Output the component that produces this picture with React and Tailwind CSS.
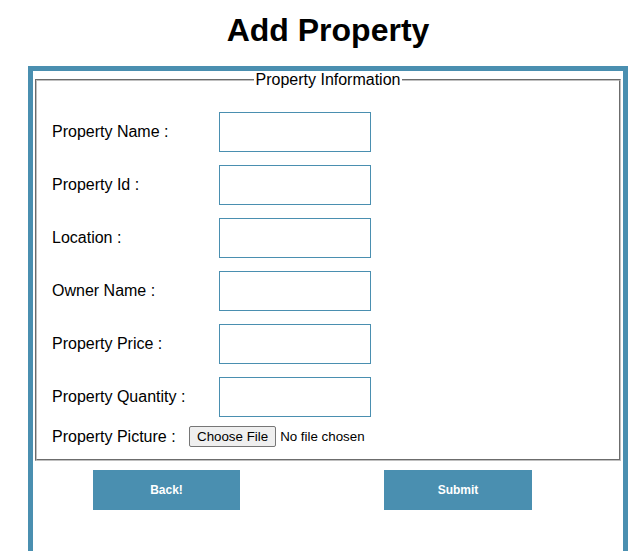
import React from "react";

const fields = [
  "Property Name :",
  "Property Id :",
  "Location :",
  "Owner Name :",
  "Property Price :",
  "Property Quantity :",
];

export default function App() {
  return (
    <div className="min-h-[551px] bg-white font-['Liberation_Sans',Arial,sans-serif] text-black leading-[normal]">
      <div className="ml-[28px] w-[600px]">
        <h1 className="pt-[12px] pb-[17px] text-center text-[32px] font-bold leading-[37px]">
          Add Property
        </h1>
        <div className="border-[5px] border-[#4a8fb0] pb-[60px]">
          <fieldset className="mx-[2px] border-2 [border-style:groove] border-[#c0c0c0] px-[12px] pt-[23px] pb-[12px]">
            <legend className="mx-auto px-[2px] text-[16px] leading-[18px]">
              Property Information
            </legend>
            <div className="pl-[3px]">
              <div className="flex flex-col gap-[13px]">
                {fields.map((f) => (
                  <div key={f} className="flex items-center">
                    <label className="w-[167px] text-[16px] leading-[18px]">{f}</label>
                    <input
                      type="text"
                      className="h-[40px] w-[152px] border border-[#4a8fb0] bg-white outline-none"
                    />
                  </div>
                ))}
              </div>
              <div className="mt-[9px] flex items-center">
                <label className="w-[137px] text-[16px] leading-[18px]">Property Picture :</label>
                <button
                  type="button"
                  className="h-[21px] rounded-[2px] border border-[#767676] bg-[#efefef] px-[7px] text-[13.33px] leading-[15px]"
                >
                  Choose File
                </button>
                <span className="ml-[4px] text-[13.33px] leading-[15px]">No file chosen</span>
              </div>
            </div>
          </fieldset>
          <div className="mt-[9px] flex">
            <button
              type="button"
              className="ml-[60px] h-[40px] w-[147px] bg-[#4a8fb0] pb-[1px] text-[12px] font-bold text-white"
            >
              Back!
            </button>
            <button
              type="button"
              className="ml-[144px] h-[40px] w-[148px] bg-[#4a8fb0] pb-[1px] text-[12px] font-bold text-white"
            >
              Submit
            </button>
          </div>
        </div>
      </div>
    </div>
  );
}
